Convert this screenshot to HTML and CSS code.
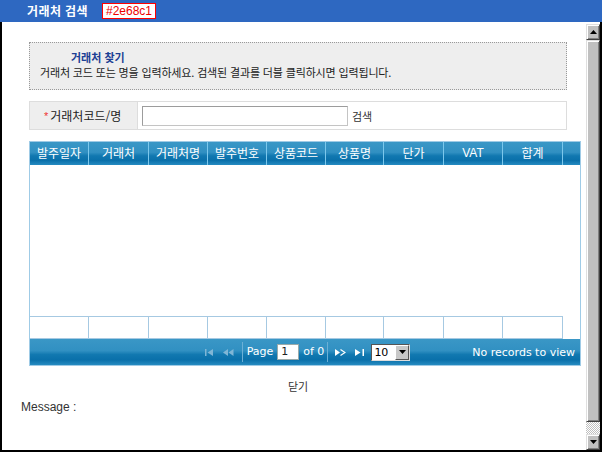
FILE: index.html
```html
<!DOCTYPE html>
<html lang="ko">
<head>
<meta charset="utf-8">
<title>거래처 검색</title>
<link rel="stylesheet" href="styles.css">
</head>
<body>
<div class="win">
  <div class="titlebar">
    <span class="title">거래처 검색</span>
    <span class="tag">#2e68c1</span>
  </div>
  <div class="frame">
    <div class="content">
      <div class="info">
        <div class="info-title">거래처 찾기</div>
        <div class="info-desc">거래처 코드 또는 명을 입력하세요. 검색된 결과를 더블 클릭하시면 입력됩니다.</div>
      </div>
      <div class="search">
        <div class="label"><span class="req">*</span>거래처코드/명</div>
        <div class="field">
          <span class="input"></span>
          <span class="btn">검색</span>
        </div>
      </div>
      <div class="grid">
        <div class="ghead">
          <div class="hc">발주일자</div>
          <div class="hc">거래처</div>
          <div class="hc">거래처명</div>
          <div class="hc">발주번호</div>
          <div class="hc">상품코드</div>
          <div class="hc">상품명</div>
          <div class="hc">단가</div>
          <div class="hc latin">VAT</div>
          <div class="hc">합계</div>
          <div class="hc last"></div>
        </div>
        <div class="gbody">
          <div class="grow">
            <div class="rc"></div><div class="rc"></div><div class="rc"></div>
            <div class="rc"></div><div class="rc"></div><div class="rc"></div>
            <div class="rc"></div><div class="rc"></div><div class="rc"></div>
          </div>
        </div>
        <div class="pager">
          <div class="pside"></div>
          <div class="pcenter">
            <svg class="pi pi-first" width="9" height="7" viewBox="0 0 9 7"><rect x="0" y="0" width="1.5" height="7"/><path d="M8 0 L2.5 3.5 L8 7 Z"/></svg>
            <svg class="pi pi-prev" width="11" height="7" viewBox="0 0 11 7"><path d="M5 0 L0 3.5 L5 7 Z"/><path d="M10.5 0 L5.5 3.5 L10.5 7 Z"/></svg>
            <span class="psep"></span>
            <span class="ptext">Page</span>
            <span class="pinput">1</span>
            <span class="ptext">of 0</span>
            <span class="psep psep2"></span>
            <svg class="pi pi-next" width="11" height="7" viewBox="0 0 11 7"><path d="M0 0 L5 3.5 L0 7 Z"/><path d="M5.5 0.5 L10 3.5 L5.5 6.5" fill="none" stroke="#fff" stroke-width="1.2"/></svg>
            <svg class="pi pi-last" width="9" height="7" viewBox="0 0 9 7"><path d="M0 0 L5.5 3.5 L0 7 Z"/><rect x="7.5" y="0" width="1.5" height="7"/></svg>
            <span class="psel"><span class="psel-val">10</span><span class="psel-btn"><svg width="7" height="4" viewBox="0 0 7 4"><path d="M0 0 H7 L3.5 4 Z"/></svg></span></span>
          </div>
          <div class="pside pright">No records to view</div>
        </div>
      </div>
      <div class="close">닫기</div>
      <div class="msg">Message :</div>
    </div>
    <div class="sbar">
      <div class="sb-btn"><svg width="7" height="4" viewBox="0 0 7 4"><path d="M3.5 0 L7 4 H0 Z"/></svg></div>
      <div class="sb-thumb"></div>
      <div class="sb-track"></div>
      <div class="sb-btn"><svg width="7" height="4" viewBox="0 0 7 4"><path d="M0 0 H7 L3.5 4 Z"/></svg></div>
    </div>
  </div>
</div>
</body>
</html>
```

FILE: styles.css
```css
html, body {
  margin: 0;
  padding: 0;
  background: #fff;
}
body {
  font-family: "Noto Sans CJK KR", "Noto Sans", sans-serif;
  color: #333;
}
.win {
  width: 602px;
  height: 452px;
  display: flex;
  flex-direction: column;
}
.titlebar {
  height: 22px;
  flex: none;
  background: #2e68c1;
  display: flex;
  align-items: center;
  padding-left: 27px;
}
.title {
  color: #fff;
  font-size: 12px;
  letter-spacing: 0.4px;
  font-weight: bold;
  line-height: 14px;
}
.tag {
  margin-left: 14px;
  height: 14px;
  padding: 0 3px;
  border: 1px solid #ff0000;
  background: #fff;
  color: #e00;
  font-family: "Liberation Sans", Arial, sans-serif;
  font-size: 12px;
  line-height: 14px;
}
.frame {
  flex: 1;
  display: flex;
  border-left: 2px solid #000;
  border-right: 2px solid #000;
  border-bottom: 2px solid #000;
  min-height: 0;
}
.content {
  flex: 1;
  display: flex;
  flex-direction: column;
  min-width: 0;
}
.info {
  margin: 20px 0 0 27px;
  width: 538px;
  height: 48px;
  box-sizing: border-box;
  border: 1px dotted #999;
  background: #eeeeee;
  padding: 7px 0 0 10px;
}
.info-title {
  padding-left: 31px;
  font-size: 11px;
  line-height: 14px;
  font-weight: bold;
  color: #1c3f94;
}
.info-desc {
  font-size: 11px;
  letter-spacing: -0.15px;
  line-height: 16px;
  color: #222;
}
.search {
  margin: 11px 0 0 27px;
  width: 538px;
  height: 29px;
  box-sizing: border-box;
  border: 1px solid #dddddd;
  display: flex;
}
.label {
  width: 108px;
  box-sizing: border-box;
  background: #eeeeee;
  border-right: 1px solid #dddddd;
  padding-left: 14px;
  display: flex;
  align-items: center;
  font-size: 12px;
  color: #222;
}
.req {
  color: #e33;
  font-family: "Liberation Sans", Arial, sans-serif;
  font-size: 11px;
  margin-right: 2px;
}
.field {
  display: flex;
  align-items: center;
  padding-left: 4px;
}
.input {
  width: 206px;
  height: 20px;
  box-sizing: border-box;
  border: 1px solid #c4c4c4;
  border-top-color: #9c9c9c;
  border-left-color: #9c9c9c;
  background: #fff;
}
.btn {
  margin-left: 4px;
  font-size: 11px;
  color: #333;
}
.grid {
  margin: 11px 0 0 27px;
  width: 552px;
  box-sizing: border-box;
  border: 1px solid #9fcbe6;
  display: flex;
  flex-direction: column;
}
.ghead, .pager {
  background: linear-gradient(to bottom, #3a97c6 0%, #3190c2 45%, #1178b0 60%, #0a70aa 80%, #268bc1 100%);
}
.ghead {
  height: 23px;
  display: grid;
  grid-template-columns: 59px 60px 59px 59px 59px 58px 60px 59px 60px 1fr;
}
.hc {
  border-right: 1px solid #7cc8ec;
  color: #fff;
  font-size: 12px;
  line-height: 22px;
  text-align: center;
  white-space: nowrap;
  overflow: hidden;
}
.hc.latin {
  font-family: "Liberation Sans", Arial, sans-serif;
  font-size: 12px;
}
.hc.last {
  border-right: none;
}
.gbody {
  height: 174px;
  background: #fff;
  display: flex;
  flex-direction: column;
  justify-content: flex-end;
}
.grow {
  height: 23px;
  box-sizing: border-box;
  display: grid;
  grid-template-columns: 59px 60px 59px 59px 59px 58px 60px 59px 60px;
  width: 533px;
  border-top: 1px solid #a6c9e2;
  border-bottom: 1px solid #a6c9e2;
}
.rc {
  border-right: 1px solid #a6c9e2;
}
.pager {
  height: 26px;
  display: grid;
  grid-template-columns: 1fr auto 1fr;
  align-items: center;
  color: #fff;
  font-family: "DejaVu Sans", Verdana, sans-serif;
  font-size: 11px;
}
.pcenter {
  display: flex;
  align-items: center;
  padding-left: 5px;
}
.pi {
  display: block;
}
.pi-first, .pi-prev {
  fill: #7fb6d6;
}
.pi-next, .pi-last {
  fill: #fff;
}
.pi-first { margin-right: 9px; }
.pi-prev { margin-right: 8px; }
.psep {
  width: 1px;
  height: 20px;
  background: #6cb0d6;
  margin-right: 4px;
}
.psep2 {
  margin-left: 3px;
  margin-right: 7px;
}
.ptext {
  line-height: 14px;
  white-space: nowrap;
}
.pinput {
  margin: 0 4px;
  width: 22px;
  height: 16px;
  box-sizing: border-box;
  background: #fff;
  border: 1px solid #9aa;
  color: #222;
  padding-left: 3px;
  font-size: 11px;
  line-height: 14px;
}
.pi-next { margin-right: 9px; }
.pi-last { margin-right: 7px; }
.psel {
  display: flex;
  width: 39px;
  height: 17px;
  box-sizing: border-box;
  border: 1px solid #555;
  border-right-color: #ddd;
  border-bottom-color: #ddd;
  background: #fff;
}
.psel-val {
  flex: 1;
  color: #000;
  font-size: 11px;
  line-height: 15px;
  padding-left: 2px;
}
.psel-btn {
  width: 14px;
  box-sizing: border-box;
  background: #c8c8c8;
  border: 1px solid #fff;
  border-right-color: #555;
  border-bottom-color: #555;
  display: flex;
  align-items: center;
  justify-content: center;
}
.pright {
  text-align: right;
  padding-right: 5px;
  white-space: nowrap;
}
.close {
  margin-top: 12px;
  padding-left: 8px;
  text-align: center;
  font-size: 11px;
  line-height: 16px;
}
.msg {
  margin: 5px 0 0 19px;
  font-family: "Liberation Sans", Arial, sans-serif;
  font-size: 12px;
  line-height: 16px;
  color: #333;
}
.sbar {
  width: 14px;
  flex: none;
  margin-top: 2px;
  display: flex;
  flex-direction: column;
}
.sb-btn, .sb-thumb {
  background: #c0c0c0;
  box-sizing: border-box;
  border: 1px solid #dfdfdf;
  border-right-color: #404040;
  border-bottom-color: #404040;
  box-shadow: inset 1px 1px 0 #fff, inset -1px -1px 0 #808080;
}
.sb-btn {
  height: 16px;
  flex: none;
  display: flex;
  align-items: center;
  justify-content: center;
}
.sb-thumb {
  flex: 1;
}
.sb-track {
  height: 12px;
  flex: none;
  background: repeating-conic-gradient(#ffffff 0 25%, #c0c0c0 0 50%) 0 0 / 2px 2px;
}
```
